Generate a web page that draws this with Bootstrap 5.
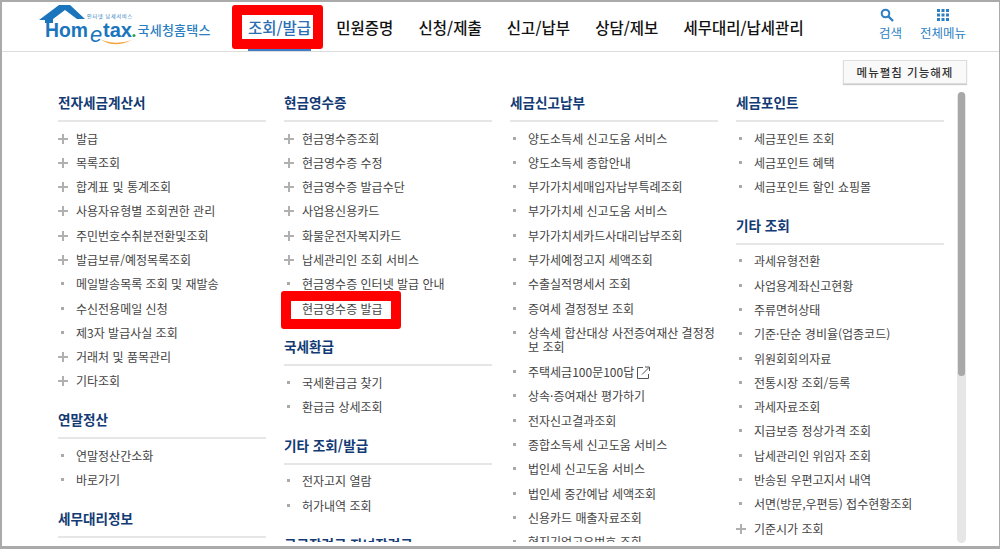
<!DOCTYPE html>
<html lang="ko">
<head>
  <meta charset="UTF-8" />
  <meta name="viewport" content="width=device-width, initial-scale=1.0" />
  <title>홈택스 조회/발급</title>
  <link href="https://cdn.jsdelivr.net/npm/bootstrap@5.3.3/dist/css/bootstrap.min.css" rel="stylesheet">
  <style>
    html, body { height: 100%; overflow: hidden; }
    body { font-family: "Noto Sans CJK KR", "Liberation Sans", sans-serif; color: #333; background: #fff; }
    .frame { height: 549px; border: solid #aaa; border-width: 2px 1px 3px 2px; position: relative; overflow: hidden; }
    .top-bar { height: 50px; border-bottom: 1px solid #ddd; padding-left: 36px; }
    .logo-box { width: 178px; height: 44px; flex: none; }
    .main-menu { margin-left: 32px; gap: 25.2px; }
    .main-menu a { font-size: 15.5px; font-weight: 500; color: #111; text-decoration: none; height: 49px; line-height: 50px; display: block; }
    .main-menu a.on { color: #2a6fb5; border-bottom: 2px solid #3f7cc8; }
    .util-btn { color: #2c7fc4; font-size: 12.5px; text-decoration: none; text-align: center; line-height: 14px; }
    .util-btn svg { display: block; margin: 0 auto 4px; }
    .util-btn.find-btn svg { margin-left: 1px; }
    .util-area { margin-left: auto; gap: 18px; padding-right: 33px; align-self: flex-start; margin-top: 6px; }
    .page-body { padding: 8px 32px 0 56px; }
    .fold-btn { font-size: 11.5px; font-weight: 500; letter-spacing: 1px; color: #333; background: #f9f9f9; border: 1px solid #ddd; box-shadow: 0 1px 1px #ccc; width: 124px; height: 24px; border-radius: 0; padding: 0; line-height: 22px; }
    .menu-area { gap: 18px; margin-top: 8px; height: 450px; overflow: hidden; }
    .menu-col { width: 208px; flex: none; }
    .menu-head { font-size: 13.6px; font-weight: 700; color: #123a74; line-height: 20px; padding: 0 0 8px; border-bottom: 2px solid #e6e6e6; margin: 0 0 4.500px; }
    .menu-list { list-style: none; padding: 0; margin: 0 0 15.500px; }
    .menu-list li { font-size: 12px; line-height: 14px; padding: 5px 0 5.3px 18px; color: #444; position: relative; }
    .menu-list li.link-row { margin-top: 1px; }
    .menu-list li::before { content: ""; position: absolute; left: 3px; top: 10px; width: 3px; height: 3px; background: #aaa; }
    .menu-list li.has-sub::before { left: 0; top: 7px; width: 10px; height: 10px; background:
      linear-gradient(#b0b0b0, #b0b0b0) center/10px 2px no-repeat,
      linear-gradient(#b0b0b0, #b0b0b0) center/2px 10px no-repeat; }
    .out-icon { vertical-align: -2px; margin-left: 3px; }
    .scroll-track { position: absolute; left: 955px; top: 90px; width: 9px; height: 451px; background: #e6e6e6; border-radius: 4.500px; }
    .scroll-thumb { width: 7px; margin-left: 1px; height: 284px; background: #a8a8a8; border-radius: 3.500px; }
    .red-box { position: absolute; border: 10px solid #f00; border-radius: 3px; }
    .red-one { left: 230px; top: 3px; width: 91px; height: 44px; }
    .red-two { left: 279px; top: 289px; width: 120px; height: 38px; }
  </style>
</head>
<body>
  <div class="frame">
    <header class="top-bar d-flex align-items-center">
      <div class="logo-box">
        <svg width="178" height="44" viewBox="0 0 178 44">
          <path d="M1 15 L21 0 H32 L47 14 H39 L27 5 L15 14 V18 H7 V15 Z" fill="#1b75bc"/>
          <text x="7" y="32" font-family="Liberation Sans" font-weight="700" font-size="21" fill="#1b75bc" textLength="43" lengthAdjust="spacingAndGlyphs">Hom</text>
          <text x="52" y="37" font-family="Liberation Sans" font-style="italic" font-size="22" fill="#1b75bc">e</text>
          <text x="65" y="32" font-family="Liberation Sans" font-weight="700" font-size="21" fill="#1b75bc" textLength="29" lengthAdjust="spacingAndGlyphs">tax</text>
          <circle cx="96" cy="30.500" r="1.500" fill="#2e9e4f"/>
          <path d="M62 34 Q76 44 94 35 Q77 41 62 34 Z" fill="#f0a63c"/>
          <text x="49" y="13" font-size="5" fill="#1b75bc" textLength="45">인터넷 납세서비스</text>
          <text x="99.500" y="30" font-size="13" font-weight="500" fill="#2b7fc0" textLength="73">국세청홈택스</text>
        </svg>
      </div>
      <nav class="main-menu d-flex">
        <a class="on" href="#">조회/발급</a>
        <a href="#">민원증명</a>
        <a href="#">신청/제출</a>
        <a href="#">신고/납부</a>
        <a href="#">상담/제보</a>
        <a href="#">세무대리/납세관리</a>
      </nav>
      <div class="util-area d-flex">
        <a class="util-btn find-btn" href="#">
          <svg width="14" height="14" viewBox="0 0 14 14"><circle cx="5.500" cy="5.500" r="3.800" fill="none" stroke="#2c7fc4" stroke-width="2"/><path d="M8.500 8.500 L13 13" stroke="#2c7fc4" stroke-width="2.400"/></svg>
          검색
        </a>
        <a class="util-btn" href="#">
          <svg width="14" height="14" viewBox="0 0 14 14" fill="#2c7fc4"><rect x="1" y="1" width="3" height="3"/><rect x="5.500" y="1" width="3" height="3"/><rect x="10" y="1" width="3" height="3"/><rect x="1" y="5.500" width="3" height="3"/><rect x="5.500" y="5.500" width="3" height="3"/><rect x="10" y="5.500" width="3" height="3"/><rect x="1" y="10" width="3" height="3"/><rect x="5.500" y="10" width="3" height="3"/><rect x="10" y="10" width="3" height="3"/></svg>
          전체메뉴
        </a>
      </div>
    </header>

    <main class="page-body">
      <div class="d-flex justify-content-end"><button class="btn fold-btn" type="button">메뉴펼침 기능해제</button></div>
      <div class="menu-area d-flex">
        <section class="menu-col">
          <h3 class="menu-head">전자세금계산서</h3>
          <ul class="menu-list">
            <li class="has-sub">발급</li>
            <li class="has-sub">목록조회</li>
            <li class="has-sub">합계표 및 통계조회</li>
            <li class="has-sub">사용자유형별 조회권한 관리</li>
            <li class="has-sub">주민번호수취분전환및조회</li>
            <li class="has-sub">발급보류/예정목록조회</li>
            <li>메일발송목록 조회 및 재발송</li>
            <li>수신전용메일 신청</li>
            <li>제3자 발급사실 조회</li>
            <li class="has-sub">거래처 및 품목관리</li>
            <li class="has-sub">기타조회</li>
          </ul>
          <h3 class="menu-head">연말정산</h3>
          <ul class="menu-list">
            <li>연말정산간소화</li>
            <li>바로가기</li>
          </ul>
          <h3 class="menu-head">세무대리정보</h3>
        </section>
        <section class="menu-col">
          <h3 class="menu-head">현금영수증</h3>
          <ul class="menu-list">
            <li class="has-sub">현금영수증조회</li>
            <li class="has-sub">현금영수증 수정</li>
            <li class="has-sub">현금영수증 발급수단</li>
            <li class="has-sub">사업용신용카드</li>
            <li class="has-sub">화물운전자복지카드</li>
            <li class="has-sub">납세관리인 조회 서비스</li>
            <li>현금영수증 인터넷 발급 안내</li>
            <li>현금영수증 발급</li>
          </ul>
          <h3 class="menu-head">국세환급</h3>
          <ul class="menu-list">
            <li>국세환급금 찾기</li>
            <li>환급금 상세조회</li>
          </ul>
          <h3 class="menu-head">기타 조회/발급</h3>
          <ul class="menu-list">
            <li>전자고지 열람</li>
            <li>허가내역 조회</li>
          </ul>
          <h3 class="menu-head">근로장려금 자녀장려금</h3>
        </section>
        <section class="menu-col">
          <h3 class="menu-head">세금신고납부</h3>
          <ul class="menu-list">
            <li>양도소득세 신고도움 서비스</li>
            <li>양도소득세 종합안내</li>
            <li>부가가치세매입자납부특례조회</li>
            <li>부가가치세 신고도움 서비스</li>
            <li>부가가치세카드사대리납부조회</li>
            <li>부가세예정고지 세액조회</li>
            <li>수출실적명세서 조회</li>
            <li>증여세 결정정보 조회</li>
            <li>상속세 합산대상 사전증여재산 결정정보 조회</li>
            <li class="link-row">주택세금100문100답<svg class="out-icon" width="13" height="13" viewBox="0 0 13 13" fill="none" stroke="#555"><path d="M6 1.500 H.5 V12.500 H11.500 V8"/><path d="M5 8.500 L12 1.500 M8 1 H12.500 V5"/></svg></li>
            <li>상속·증여재산 평가하기</li>
            <li>전자신고결과조회</li>
            <li>종합소득세 신고도움 서비스</li>
            <li>법인세 신고도움 서비스</li>
            <li>법인세 중간예납 세액조회</li>
            <li>신용카드 매출자료조회</li>
            <li>현지기업고유번호 조회</li>
          </ul>
        </section>
        <section class="menu-col">
          <h3 class="menu-head">세금포인트</h3>
          <ul class="menu-list">
            <li>세금포인트 조회</li>
            <li>세금포인트 혜택</li>
            <li>세금포인트 할인 쇼핑몰</li>
          </ul>
          <h3 class="menu-head">기타 조회</h3>
          <ul class="menu-list">
            <li>과세유형전환</li>
            <li>사업용계좌신고현황</li>
            <li>주류면허상태</li>
            <li>기준·단순 경비율(업종코드)</li>
            <li>위원회회의자료</li>
            <li>전통시장 조회/등록</li>
            <li>과세자료조회</li>
            <li>지급보증 정상가격 조회</li>
            <li>납세관리인 위임자 조회</li>
            <li>반송된 우편고지서 내역</li>
            <li>서면(방문,우편등) 접수현황조회</li>
            <li class="has-sub">기준시가 조회</li>
          </ul>
        </section>
      </div>
    </main>

    <div class="scroll-track"><div class="scroll-thumb"></div></div>
    <div class="red-box red-one"></div>
    <div class="red-box red-two"></div>
  </div>
  <script src="https://cdn.jsdelivr.net/npm/bootstrap@5.3.3/dist/js/bootstrap.bundle.min.js"></script>
</body>
</html>
